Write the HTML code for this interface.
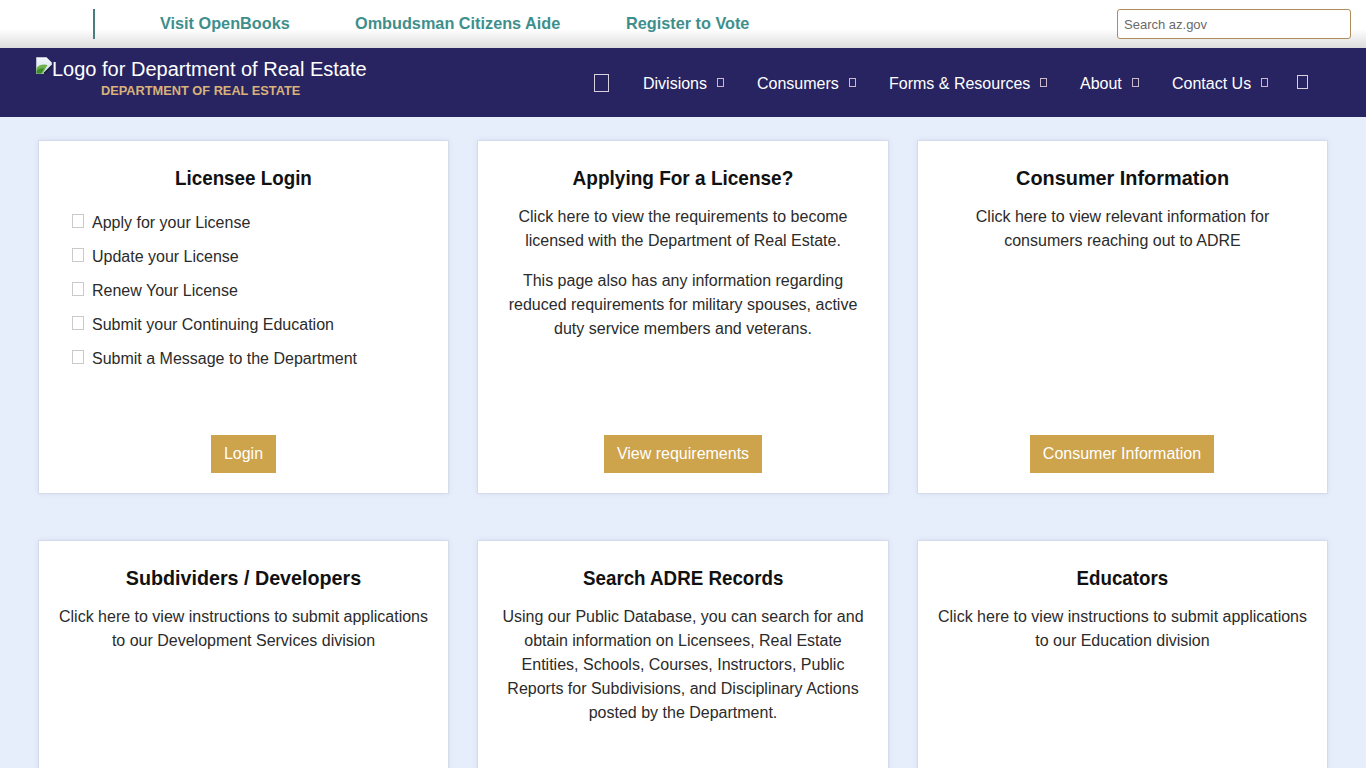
<!DOCTYPE html>
<html><head><meta charset="utf-8">
<style>
*{box-sizing:border-box;margin:0;padding:0}
html,body{width:1366px;height:768px;overflow:hidden}
body{font-family:"Liberation Sans",sans-serif;background:#e6edfb;position:relative;color:#222}
.topbar{position:absolute;left:0;top:0;width:1366px;height:48px;background:linear-gradient(to bottom,#fff 0,#fff 29px,#dcdcdc 48px)}
.vline{position:absolute;left:93px;top:9px;width:2px;height:30px;background:#4a7b7d}
.tl{position:absolute;top:13.5px;font-weight:bold;font-size:16.25px;color:#3e8f8c;white-space:nowrap}
.search{position:absolute;left:1117px;top:9px;width:234px;height:30px;border:1px solid #ae8c5e;border-radius:3px;background:#fff;font-size:13px;color:#6a6a6a;padding:7px 0 0 6px}
.nav{position:absolute;left:0;top:48px;width:1366px;height:69px;background:#282461}
.logo{position:absolute;left:52px;top:57.7px;color:#fff;font-size:20px;white-space:nowrap}
.dept{position:absolute;left:101px;top:83px;color:#d8b27a;font-weight:bold;font-size:13.6px;transform:scaleX(.94);transform-origin:0 0;white-space:nowrap}
.ni{position:absolute;top:75px;color:#fff;font-size:16px;white-space:nowrap}
.bx{position:absolute;border:1.5px solid #d8d0dc}
.sbx{position:absolute;border:1px solid #cbb9c9;width:7px;height:9px;top:78px}
.card{position:absolute;background:#fff;width:409px;box-shadow:0 0 0 1px rgba(205,212,225,.55),0 0 5px rgba(150,165,190,.3)}
.card h2 span{display:inline-block;transform-origin:50% 50%}
.card h2{position:absolute;left:0;width:100%;text-align:center;font-size:21px;font-weight:bold;color:#111;white-space:nowrap}
.card p{position:absolute;left:0;width:100%;text-align:center;font-size:16px;line-height:24px;color:#2b2b2b}
.btn{position:absolute;background:#cda34c;color:#fff;font-size:16px;height:38px;line-height:38px;text-align:center;white-space:nowrap}
.li{position:absolute;left:33px;font-size:16px;color:#2b2b2b;white-space:nowrap}
.li i{display:inline-block;width:12px;height:14px;border:1px solid #cacaca;margin-right:8px;vertical-align:0}
</style></head><body>
<div class="topbar"></div>
<div class="vline"></div>
<div class="tl" style="left:160px">Visit OpenBooks</div>
<div class="tl" style="left:355px">Ombudsman Citizens Aide</div>
<div class="tl" style="left:626px">Register to Vote</div>
<div class="search">Search az.gov</div>

<div class="nav"></div>
<svg style="position:absolute;left:36px;top:57px" width="17" height="17" viewBox="0 0 17 17">
<defs><linearGradient id="sk" x1="0" y1="0" x2="0" y2="1"><stop offset="0" stop-color="#f4f6fb"/><stop offset="1" stop-color="#cfe0f2"/></linearGradient></defs>
<path d="M0.5 0.5h10l5 5v3.5l-7.5 7.5h-8z" fill="url(#sk)" stroke="#bfc3cf" stroke-width="1"/>
<path d="M0.5 11c3-4 8-4 11-3l-5 8.5h-6z" fill="#6cb24a"/>
<path d="M0.5 14c2-2 5-3 7.5-2.5l-3 5h-4.5z" fill="#3d8a2c"/>
<path d="M8 16.5l8-8" stroke="#15152a" stroke-width="1.6"/>
</svg>
<div class="logo">Logo for Department of Real Estate</div>
<div class="dept">DEPARTMENT OF REAL ESTATE</div>
<div class="bx" style="left:594px;top:74px;width:15px;height:18px"></div>
<div class="ni" style="left:643px">Divisions</div><div class="sbx" style="left:717px"></div>
<div class="ni" style="left:757px">Consumers</div><div class="sbx" style="left:849px"></div>
<div class="ni" style="left:889px">Forms &amp; Resources</div><div class="sbx" style="left:1040px"></div>
<div class="ni" style="left:1080px">About</div><div class="sbx" style="left:1132px"></div>
<div class="ni" style="left:1172px">Contact Us</div><div class="sbx" style="left:1261px"></div>
<div class="bx" style="left:1297px;top:75px;width:11px;height:14px"></div>

<div class="card" style="left:39px;top:141px;height:352px">
<h2 style="top:24.8px"><span style="transform:scaleX(0.895)">Licensee Login</span></h2>
<div class="li" style="top:73px"><i></i>Apply for your License</div>
<div class="li" style="top:107px"><i></i>Update your License</div>
<div class="li" style="top:141px"><i></i>Renew Your License</div>
<div class="li" style="top:175px"><i></i>Submit your Continuing Education</div>
<div class="li" style="top:209px"><i></i>Submit a Message to the Department</div>
<div class="btn" style="left:172px;top:294px;width:65px">Login</div>
</div>
<div class="card" style="left:478px;top:141px;height:352px;width:410px">
<h2 style="top:24.8px"><span style="transform:scaleX(0.905)">Applying For a License?</span></h2>
<p style="top:64px">Click here to view the requirements to become<br>licensed with the Department of Real Estate.</p>
<p style="top:128px">This page also has any information regarding<br>reduced requirements for military spouses, active<br>duty service members and veterans.</p>
<div class="btn" style="left:126px;top:294px;width:158px">View requirements</div>
</div>
<div class="card" style="left:918px;top:141px;height:352px">
<h2 style="top:24.8px"><span style="transform:scaleX(0.946)">Consumer Information</span></h2>
<p style="top:64px">Click here to view relevant information for<br>consumers reaching out to ADRE</p>
<div class="btn" style="left:112px;top:294px;width:184px">Consumer Information</div>
</div>

<div class="card" style="left:39px;top:541px;height:260px">
<h2 style="top:24.8px"><span style="transform:scaleX(0.938)">Subdividers / Developers</span></h2>
<p style="top:64px">Click here to view instructions to submit applications<br>to our Development Services division</p>
</div>
<div class="card" style="left:478px;top:541px;height:260px;width:410px">
<h2 style="top:24.8px"><span style="transform:scaleX(0.893)">Search ADRE Records</span></h2>
<p style="top:64px">Using our Public Database, you can search for and<br>obtain information on Licensees, Real Estate<br>Entities, Schools, Courses, Instructors, Public<br>Reports for Subdivisions, and Disciplinary Actions<br>posted by the Department.</p>
</div>
<div class="card" style="left:918px;top:541px;height:260px">
<h2 style="top:24.8px"><span style="transform:scaleX(0.892)">Educators</span></h2>
<p style="top:64px">Click here to view instructions to submit applications<br>to our Education division</p>
</div>
</body></html>
